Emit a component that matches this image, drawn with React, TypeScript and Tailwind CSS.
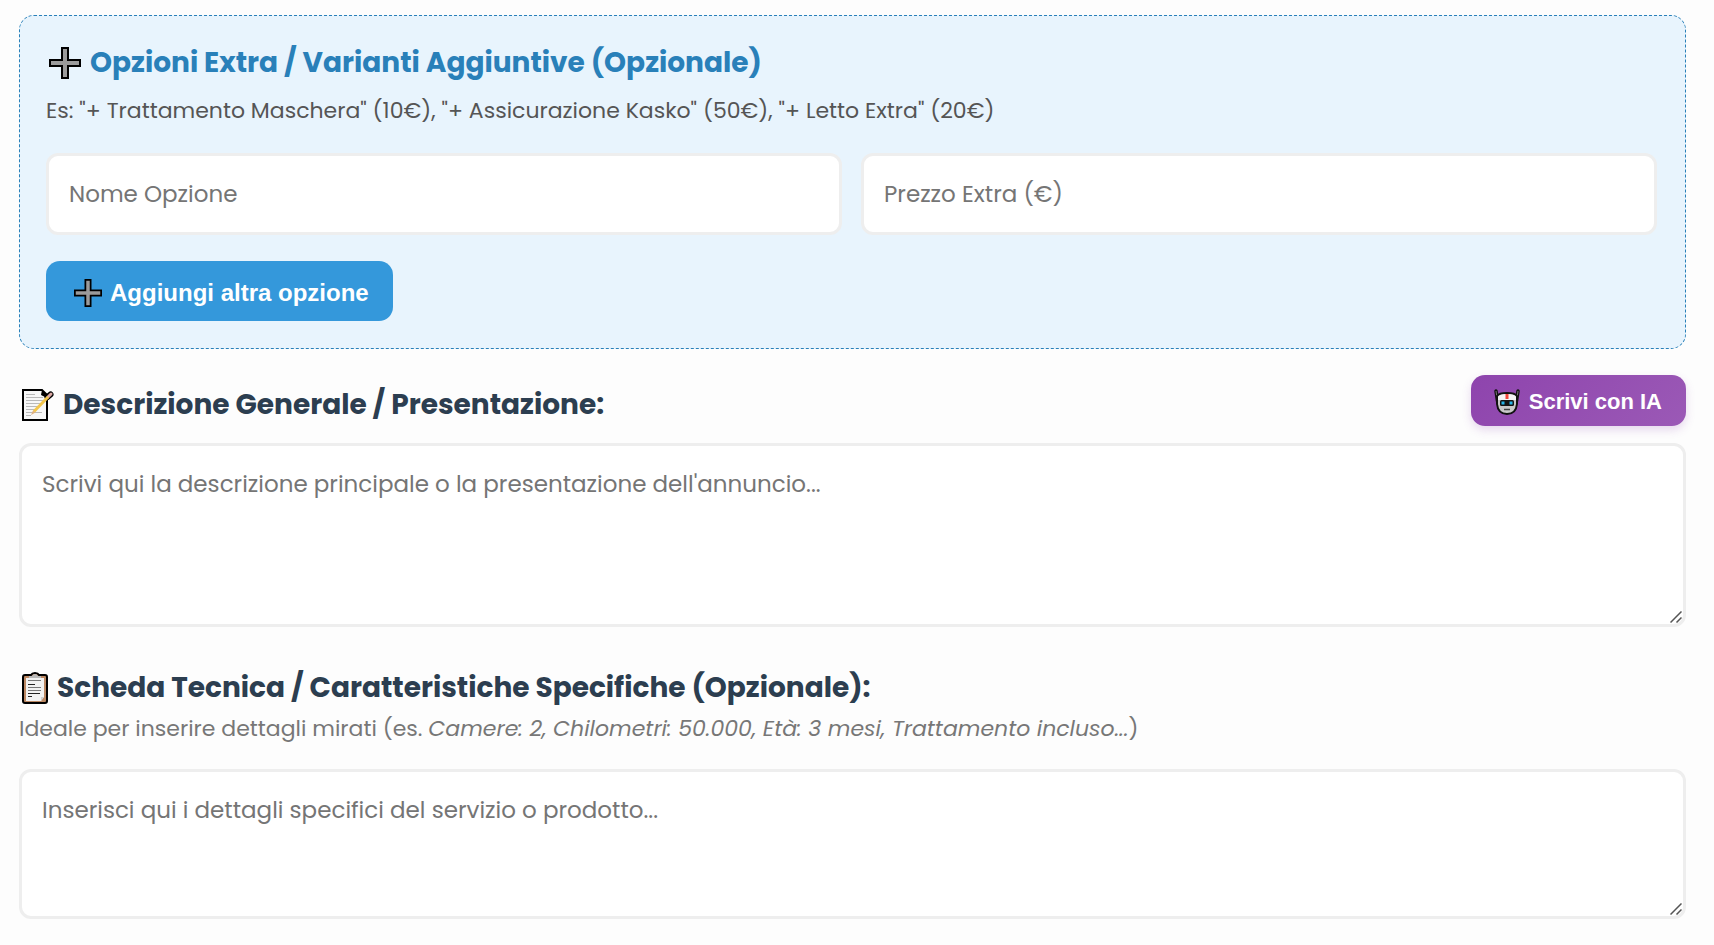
import type { TextareaHTMLAttributes } from 'react'

const fieldClass =
  'w-full rounded-xl border-3 border-[#eeeeee] bg-white px-5 text-[23px] text-[#333333] placeholder:text-[#757575] outline-none focus:border-[#3498db]'

const PlusIcon = ({ className }: { className: string }) => (
  <svg viewBox="0 0 32 32" className={className} aria-hidden="true">
    <path d="M13 1h6v12h12v6H19v12h-6V19H1v-6h12z" fill="#9b9b9b" stroke="#000" strokeWidth="2" />
  </svg>
)

const MemoIcon = () => (
  <svg viewBox="0 0 32 32" className="size-8 shrink-0" aria-hidden="true">
    <path d="M1 1h19l5 5v25H1z" fill="#f7f7f7" stroke="#000" strokeWidth="2" />
    <path d="M20 1l5 5v3l-6-3z" fill="#000" />
    <path d="M4 5.500h9M4 8.500h17M4 11.500h17M4 14.500h15M4 17.500h14M4 20.500h11M4 23.500h16M4 26.500h5" stroke="#b9b9b9" />
    <path d="M25.500 8l3-2.500" stroke="#000" strokeWidth="6" strokeLinecap="round" />
    <path d="M26 8l3-3" stroke="#dba9a4" strokeWidth="3" strokeLinecap="round" />
    <path d="M26 8L12 22.500" stroke="#f3c64c" strokeWidth="3" />
    <path d="M11 21.500L9 26l4.500-2.500z" fill="#dfb07e" />
  </svg>
)

const ClipboardIcon = () => (
  <svg viewBox="0 0 26 32" className="h-8 w-[26px] shrink-0" aria-hidden="true">
    <path d="M3 3h6q1-2 4-2t4 2h6q2 0 2 2v24q0 2-2 2H3q-2 0-2-2V5q0-2 2-2z" fill="#bb8863" stroke="#000" strokeWidth="2" />
    <path d="M4 6h18v19l-3 4H4z" fill="#f2f2f2" />
    <path d="M22 25l-3 4v-4z" fill="#cfcfcf" />
    <path d="M7 6V4h3q1-2 3-2t3 2h3v2z" fill="#b9b9b9" />
    <path d="M6 8.500h13M6 15.500h13M6 18.500h13" stroke="#777" />
    <path d="M6 12.500h7M6 21.500h12M6 24.500h4" stroke="#222" />
  </svg>
)

const RobotIcon = () => (
  <svg viewBox="0 0 26 26" className="size-[26px] shrink-0" fill="none" aria-hidden="true">
    <path d="M2 2l1.500 10M24 2l-1.500 10" stroke="#111" strokeWidth="3.500" strokeLinecap="round" />
    <path d="M2 2l1 7M24 2l-1 7" stroke="#777" />
    <path d="M3 7q2-3 10-3t10 3v8q-1 10-10 10T3 15z" fill="#c9c9c9" stroke="#111" strokeWidth="2" />
    <path d="M4 8q1-3 9-3t9 3v3H4z" fill="#f4f4f4" />
    <path d="M11.500 5h3v5h-3z" fill="#f0453a" />
    <rect x="6" y="11" width="14" height="6" rx="1.500" fill="#141414" />
    <path d="M7.500 12.500h3v3h-3zM15.500 12.500h3v3h-3z" fill="#25b5e8" />
    <path d="M10 20.500h6" stroke="#444" strokeWidth="1.500" />
  </svg>
)

const TextArea = ({ className, ...props }: TextareaHTMLAttributes<HTMLTextAreaElement>) => (
  <div className={`relative ${className}`}>
    <textarea
      {...props}
      className={`${fieldClass} block h-full resize-y py-5 leading-9 [&::-webkit-resizer]:bg-transparent`}
    />
    <svg viewBox="0 0 12 12" className="pointer-events-none absolute right-1 bottom-1 size-3" aria-hidden="true">
      <path d="M0.500 11.500l11-11M6.500 11.500l5-5" stroke="#555555" strokeWidth="1.500" />
    </svg>
  </div>
)

const App = () => {
  return (
    <main className="min-h-screen bg-[#fdfdfd] pt-[15px] pr-7 pb-[26px] pl-[19px] font-['Poppins','Inter',sans-serif]">
      <section className="rounded-[15px] border border-dashed border-[#2980b9] bg-[#e8f4fd] pt-[26px] pr-7 pb-[27px] pl-[26px]">
        <h2 className="flex items-center gap-[9px] pl-[3px] text-[28px] leading-[42px] font-bold text-[#2980b9]">
          <PlusIcon className="size-8 shrink-0" />
          Opzioni Extra / Varianti Aggiuntive (Opzionale)
        </h2>
        <p className="mt-[9px] text-[22px] leading-9 text-[#555555]">
          Es: "+ Trattamento Maschera" (10€), "+ Assicurazione Kasko" (50€), "+ Letto Extra" (20€)
        </p>
        <div className="mt-6 grid grid-cols-2 gap-[19px]">
          <input type="text" aria-label="Nome Opzione" placeholder="Nome Opzione" className={`${fieldClass} h-[82px]`} />
          <input type="text" aria-label="Prezzo Extra (€)" placeholder="Prezzo Extra (€)" className={`${fieldClass} h-[82px]`} />
        </div>
        <button
          type="button"
          className="mt-[26px] flex h-[60px] items-center gap-2 rounded-[14px] bg-[#3498db] pt-1 pr-6 pl-7 font-['Liberation_Sans',sans-serif] text-2xl font-bold text-white"
        >
          <PlusIcon className="size-7 shrink-0" />
          Aggiungi altra opzione
        </button>
      </section>

      <section className="mt-[26px]">
        <div className="flex items-center justify-between">
          <label htmlFor="descrizione" className="flex items-center gap-[9px] pt-2 pl-[3px] text-[28px] leading-10 font-bold text-[#2c3e50]">
            <MemoIcon />
            Descrizione Generale / Presentazione:
          </label>
          <button
            type="button"
            className="flex h-[51px] items-center gap-[9px] rounded-[14px] bg-linear-135 from-[#8e44ad] to-[#9b59b6] pt-[2px] pr-6 pl-[23px] font-['Liberation_Sans',sans-serif] text-[22px] font-bold text-white shadow-[0_4px_10px_rgba(142,68,173,0.2)]"
          >
            <RobotIcon />
            Scrivi con IA
          </button>
        </div>
        <TextArea
          id="descrizione"
          placeholder="Scrivi qui la descrizione principale o la presentazione dell'annuncio..."
          className="mt-[17px] h-[184px]"
        />
      </section>

      <section className="mt-[41px]">
        <label htmlFor="scheda" className="flex items-center gap-[9px] pl-[3px] text-[28px] leading-10 font-bold text-[#2c3e50]">
          <ClipboardIcon />
          Scheda Tecnica / Caratteristiche Specifiche (Opzionale):
        </label>
        <p className="mt-[3px] text-[22px] leading-9 text-[#777777]">
          Ideale per inserire dettagli mirati (es. <em>Camere: 2, Chilometri: 50.000, Età: 3 mesi, Trattamento incluso...</em>)
        </p>
        <TextArea
          id="scheda"
          placeholder="Inserisci qui i dettagli specifici del servizio o prodotto..."
          className="mt-[22px] h-[150px]"
        />
      </section>
    </main>
  )
}

export default App
